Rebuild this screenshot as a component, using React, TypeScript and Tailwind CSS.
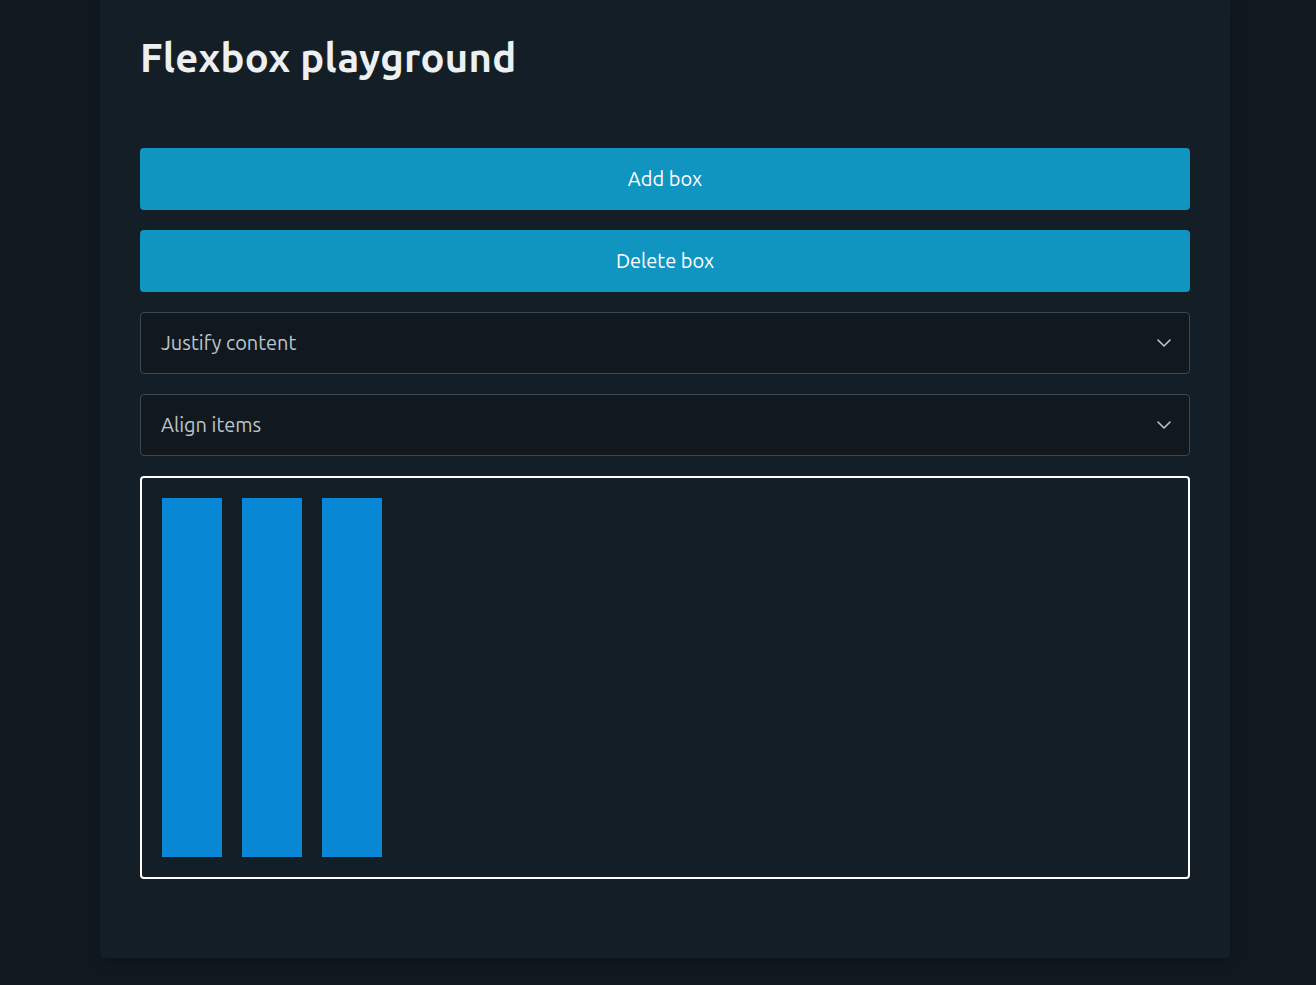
import { useState } from "react";

const font = { fontFamily: "Ubuntu, 'Noto Sans', 'Open Sans', sans-serif" };

function Chevron() {
  return (
    <svg width="24" height="24" viewBox="0 0 24 24" fill="none" stroke="#bbc6ce" strokeWidth="1.6" strokeLinecap="round" strokeLinejoin="round">
      <polyline points="6 9 12 15 18 9" />
    </svg>
  );
}

function SelectBox({ label }: { label: string }) {
  return (
    <div className="mb-5 flex h-[62px] items-center justify-between rounded-[4px] border border-[#374956] bg-[#11191f] pl-5 pr-[13px] text-[20px] text-[#bbc6ce]">
      <span>{label}</span>
      <Chevron />
    </div>
  );
}

export default function App() {
  const [count, setCount] = useState(3);
  const boxes = Array.from({ length: count }, (_, i) => i);

  return (
    <div className="min-h-[985px] bg-[#11191f]" style={font}>
      <div className="ml-[100px] w-[1130px] rounded-b-[4px] bg-[#141e26] px-10 pb-[79px] pt-[35px] shadow-[0_2px_14px_rgba(0,0,0,0.25)]">
        <h1 className="mb-[68px] text-[40px] font-bold leading-[45px] tracking-[0.3px] text-[#edf0f3]">Flexbox playground</h1>
        <button onClick={() => setCount(count + 1)} className="mb-5 block h-[62px] w-full rounded-[4px] bg-[#1095c1] text-[20px] text-white">Add box</button>
        <button onClick={() => setCount(Math.max(0, count - 1))} className="mb-5 block h-[62px] w-full rounded-[4px] bg-[#1095c1] text-[20px] text-white">Delete box</button>
        <SelectBox label="Justify content" />
        <SelectBox label="Align items" />
        <div className="flex h-[403px] gap-5 rounded-[4px] border-2 border-white p-5">
          {boxes.map((i) => (
            <div key={i} className="w-[60px] bg-[#0887d4]" />
          ))}
        </div>
      </div>
    </div>
  );
}
